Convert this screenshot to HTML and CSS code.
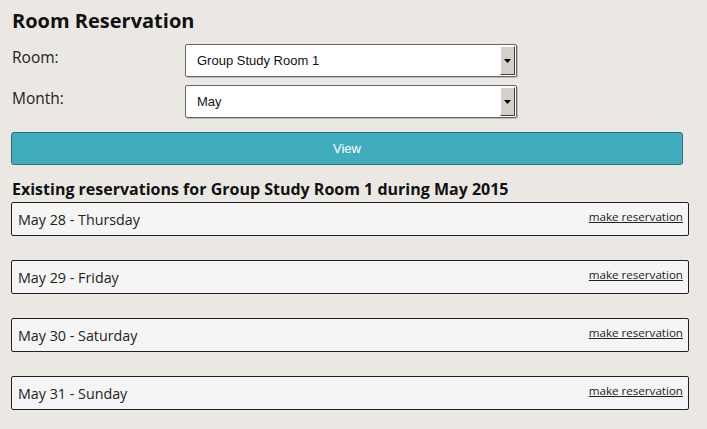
FILE: index.html
```html
<!DOCTYPE html>
<html>
<head>
<meta charset="utf-8">
<link rel="stylesheet" href="styles.css">
</head>
<body>
<div class="page">
  <h1 class="title">Room Reservation</h1>
  <div class="form">
    <div class="field">
      <label class="label">Room:</label>
      <div class="select"><span class="select-text">Group Study Room 1</span><span class="arrow"><svg width="7" height="4" viewBox="0 0 7 4"><path d="M0 0H7L3.5 4Z" fill="#000"/></svg></span></div>
    </div>
    <div class="field">
      <label class="label">Month:</label>
      <div class="select"><span class="select-text">May</span><span class="arrow"><svg width="7" height="4" viewBox="0 0 7 4"><path d="M0 0H7L3.5 4Z" fill="#000"/></svg></span></div>
    </div>
  </div>
  <button class="view-btn">View</button>
  <h2 class="subtitle">Existing reservations for Group Study Room 1 during May 2015</h2>
  <div class="list">
    <div class="day"><span class="day-name">May 28 - Thursday</span><a class="reserve" href="#">make reservation</a></div>
    <div class="day"><span class="day-name">May 29 - Friday</span><a class="reserve" href="#">make reservation</a></div>
    <div class="day"><span class="day-name">May 30 - Saturday</span><a class="reserve" href="#">make reservation</a></div>
    <div class="day"><span class="day-name">May 31 - Sunday</span><a class="reserve" href="#">make reservation</a></div>
  </div>
</div>
</body>
</html>
```

FILE: styles.css
```css
html, body {
  margin: 0;
  padding: 0;
  background: #ebe8e4;
}
body {
  font-family: "Open Sans", sans-serif;
  color: #111;
}
.page {
  padding: 8px 18px 0 11px;
}
.title {
  margin: 0 0 0 1px;
  font-size: 20px;
  line-height: 26px;
  font-weight: 700;
  color: #111;
}
.form {
  display: flex;
  flex-direction: column;
  gap: 8px;
  margin-top: 10px;
}
.field {
  display: grid;
  grid-template-columns: 174px 332px;
  align-items: start;
}
.label {
  font-size: 15.5px;
  line-height: 20px;
  padding-left: 1px;
  margin-top: 3px;
  color: #222;
}
.select {
  height: 31px;
  border: 1px solid #666;
  border-radius: 2px;
  background: #fff;
  display: flex;
  align-items: center;
  justify-content: space-between;
  box-shadow: 1px 1px 0 #bbb;
}
.select-text {
  font-family: "Liberation Sans", Arial, sans-serif;
  font-size: 13px;
  padding-left: 11px;
  color: #111;
}
.arrow {
  height: 29px;
  width: 15px;
  margin-right: 1px;
  background: #d4d0c8;
  border-top: 1px solid #fff;
  border-left: 1px solid #fff;
  border-right: 1px solid #404040;
  border-bottom: 1px solid #404040;
  box-sizing: border-box;
  display: flex;
  align-items: center;
  justify-content: center;
}
.view-btn {
  display: block;
  width: 672px;
  height: 33px;
  margin-top: 14px;
  background: #41acbd;
  border: 1px solid #2b6f79;
  border-radius: 3px;
  color: #fff;
  font-family: "Liberation Sans", Arial, sans-serif;
  font-size: 13px;
  padding: 0;
}
.subtitle {
  margin: 14px 0 0 1px;
  font-size: 16px;
  line-height: 20px;
  font-weight: 700;
  letter-spacing: 0;
  color: #111;
}
.list {
  display: flex;
  flex-direction: column;
  gap: 24px;
  margin-top: 3px;
}
.day {
  height: 32px;
  border: 1px solid #222;
  border-radius: 2px;
  background: #f5f5f5;
  display: flex;
  justify-content: space-between;
  align-items: flex-start;
  padding: 0 5px 0 6px;
}
.day-name {
  font-size: 14.3px;
  line-height: 20px;
  margin-top: 7px;
  color: #222;
}
.reserve {
  font-size: 11.6px;
  line-height: 14px;
  margin-top: 7px;
  color: #222;
  text-decoration: underline;
}
```
